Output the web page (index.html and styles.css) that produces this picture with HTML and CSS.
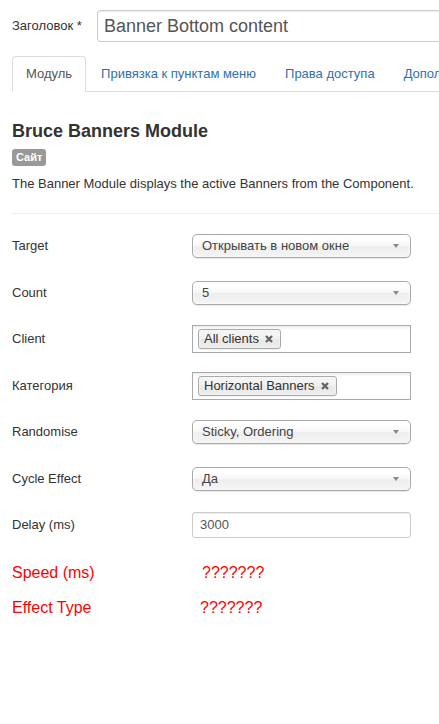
FILE: index.html
```html
<!DOCTYPE html>
<html lang="ru">
<head>
<meta charset="utf-8">
<title>Bruce Banners Module</title>
<link rel="stylesheet" href="styles.css">
</head>
<body>
<div class="page">
  <div class="title-row">
    <label class="title-label">Заголовок *</label>
    <div class="title-input">Banner Bottom content</div>
  </div>

  <ul class="tabs">
    <li class="tab active">Модуль</li>
    <li class="tab">Привязка к пунктам меню</li>
    <li class="tab">Права доступа</li>
    <li class="tab">Дополнительные параметры</li>
  </ul>

  <h3 class="module-title">Bruce Banners Module</h3>
  <div class="badge-line"><span class="badge">Сайт</span></div>
  <p class="desc">The Banner Module displays the active Banners from the Component.</p>
  <div class="rule"></div>

  <div class="form">
    <div class="row">
      <div class="label">Target</div>
      <div class="select"><span>Открывать в новом окне</span><i class="arrow"></i></div>
    </div>
    <div class="row">
      <div class="label">Count</div>
      <div class="select"><span>5</span><i class="arrow"></i></div>
    </div>
    <div class="row">
      <div class="label">Client</div>
      <div class="multi"><span class="chip">All clients<svg class="x" viewBox="0 0 8 8" width="8" height="8"><path d="M1 1L7 7M7 1L1 7"/></svg></span></div>
    </div>
    <div class="row">
      <div class="label">Категория</div>
      <div class="multi"><span class="chip">Horizontal Banners<svg class="x" viewBox="0 0 8 8" width="8" height="8"><path d="M1 1L7 7M7 1L1 7"/></svg></span></div>
    </div>
    <div class="row">
      <div class="label">Randomise</div>
      <div class="select"><span>Sticky, Ordering</span><i class="arrow"></i></div>
    </div>
    <div class="row">
      <div class="label">Cycle Effect</div>
      <div class="select"><span>Да</span><i class="arrow"></i></div>
    </div>
    <div class="row">
      <div class="label">Delay (ms)</div>
      <div class="text-input">3000</div>
    </div>
  </div>

  <div class="missing">
    <div class="mrow"><span class="mlabel">Speed (ms)</span><span class="mval">???????</span></div>
    <div class="mrow"><span class="mlabel alt">Effect Type</span><span class="mval">???????</span></div>
  </div>
</div>
</body>
</html>
```

FILE: styles.css
```css
html, body {
  margin: 0;
  padding: 0;
  background: #fff;
}
body {
  font-family: "Liberation Sans", Arial, sans-serif;
  font-size: 13px;
  line-height: 18px;
  color: #333;
  overflow: hidden;
}
.page {
  padding: 10px 0 0 12px;
  width: 427px;
  overflow: hidden;
}
.title-row {
  display: flex;
  align-items: center;
  height: 32px;
  white-space: nowrap;
}
.title-label {
  width: 85px;
  flex: none;
  color: #333;
}
.title-input {
  flex: none;
  box-sizing: border-box;
  width: 420px;
  height: 32px;
  border: 1px solid #ccc;
  border-radius: 3px;
  padding: 0 6px;
  font-size: 18px;
  line-height: 30px;
  color: #555;
  box-shadow: inset 0 1px 1px rgba(0,0,0,.075);
}
.tabs {
  list-style: none;
  margin: 14px 0 0 0;
  padding: 0;
  display: flex;
  white-space: nowrap;
  border-bottom: 1px solid #ddd;
  height: 35px;
}
.tab {
  flex: none;
  padding: 8px 13px;
  line-height: 18px;
  margin-right: 1px;
  margin-bottom: -1px;
  border: 1px solid transparent;
  border-radius: 4px 4px 0 0;
  color: #3071a9;
}
.tab.active {
  color: #555;
  background: #fff;
  border-color: #ddd #ddd transparent #ddd;
}
.module-title {
  margin: 29px 0 0 0;
  font-size: 18px;
  line-height: 20px;
  font-weight: bold;
  color: #333;
}
.badge-line {
  margin-top: 8px;
  height: 17px;
}
.badge {
  display: inline-block;
  background: #999;
  color: #fff;
  font-size: 11px;
  font-weight: bold;
  line-height: 13px;
  padding: 2px 4px;
  border-radius: 3px;
  vertical-align: top;
}
.desc {
  margin: 9px 0 0 0;
  line-height: 18px;
}
.rule {
  margin-top: 20px;
  height: 0;
  border-top: 1px solid #eee;
}
.form {
  margin-top: 18px;
  display: flex;
  flex-direction: column;
  gap: 18.5px;
}
.row {
  display: flex;
  align-items: center;
  height: 28px;
}
.label {
  width: 180px;
  flex: none;
}
.select {
  box-sizing: border-box;
  width: 219px;
  height: 24px;
  display: flex;
  align-items: center;
  justify-content: space-between;
  padding: 0 11px 0 9px;
  border: 1px solid #aaa;
  border-radius: 5px;
  color: #444;
  background: linear-gradient(#fff 20%, #f6f6f6 50%, #eee 52%, #f4f4f4 100%);
  box-shadow: inset 0 0 3px #fff, 0 1px 1px rgba(0,0,0,.1);
}
.arrow {
  width: 0;
  height: 0;
  border-left: 3px solid transparent;
  border-right: 3px solid transparent;
  border-top: 4px solid #888;
}
.multi {
  box-sizing: border-box;
  width: 219px;
  height: 28px;
  border: 1px solid #aaa;
  background: linear-gradient(#eee 1%, #fff 15%);
  padding: 3px 5px;
  display: flex;
  align-items: flex-start;
}
.chip {
  box-sizing: border-box;
  height: 20px;
  display: inline-flex;
  align-items: center;
  padding: 0 7px 0 5px;
  border: 1px solid #aaa;
  border-radius: 3px;
  background: linear-gradient(#f4f4f4 20%, #f0f0f0 50%, #e8e8e8 52%, #eee 100%);
  box-shadow: inset 0 0 2px #fff, 0 1px 0 rgba(0,0,0,.05);
  color: #333;
  line-height: 18px;
}
.x {
  margin-left: 6px;
  stroke: #666;
  stroke-width: 2.4;
  fill: none;
}
.text-input {
  box-sizing: border-box;
  width: 219px;
  height: 26px;
  border: 1px solid #ccc;
  border-radius: 3px;
  padding: 0 7px;
  line-height: 24px;
  color: #555;
  box-shadow: inset 0 1px 1px rgba(0,0,0,.075);
}
.missing {
  margin-top: 24px;
  display: flex;
  flex-direction: column;
  gap: 15px;
}
.mrow {
  display: flex;
  font-size: 16px;
  line-height: 20px;
  color: #f00;
}
.mlabel {
  width: 190px;
  flex: none;
}
.mlabel.alt {
  width: 188px;
}
```
